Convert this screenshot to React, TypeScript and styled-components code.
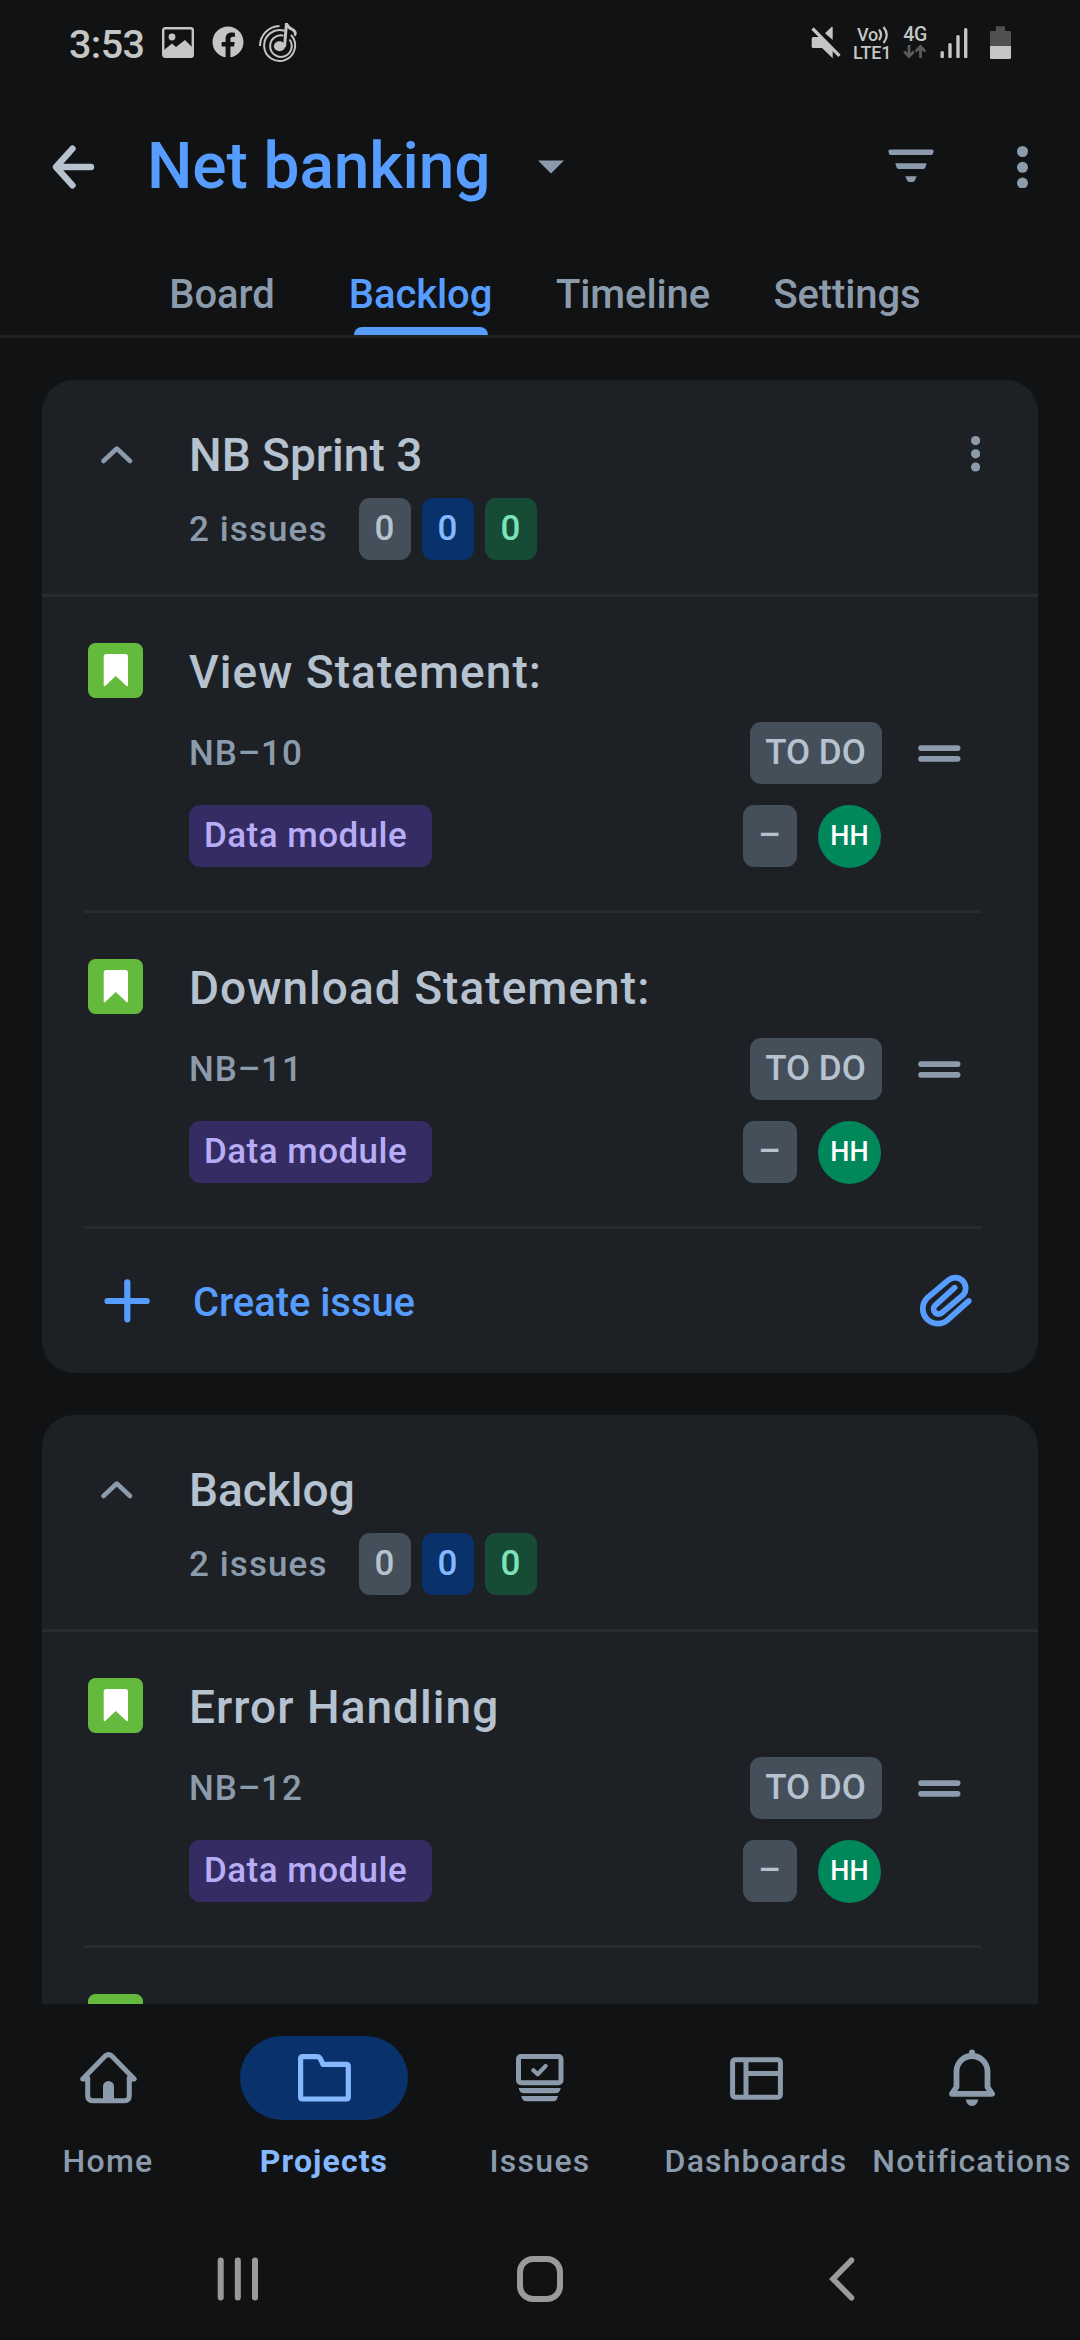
import React from 'react';
import styled, { createGlobalStyle } from 'styled-components';
import { FaFacebook } from 'react-icons/fa';

const color = {
  page: '#111213',
  nav: '#101213',
  card: '#1d2125',
  line: '#282c30',
  text: '#b6c2cf',
  subtle: '#8c9bab',
  blue: '#579dff',
  lightBlue: '#85b8ff',
  status: '#c4c5c5',
  system: '#9a9a9b',
};

const GlobalStyle = createGlobalStyle`
  * { box-sizing: border-box; }
  body {
    margin: 0;
    background: ${color.page};
    font-family: Roboto, "Liberation Sans", sans-serif;
    font-weight: 500;
  }
  svg { display: block; flex: none; }
`;

const Screen = styled.div`
  display: flex;
  flex-direction: column;
  width: 1080px;
  height: 2340px;
  overflow: hidden;
  background: ${color.page};
`;

/* Status bar */
const StatusBar = styled.div`
  display: flex;
  flex: none;
  justify-content: space-between;
  height: 88px;
  padding: 20px 69px 0 69px;
  color: ${color.status};
`;
const StatusLeft = styled.div`
  display: flex;
  height: 44px;
  align-items: center;
`;
const Clock = styled.span`
  width: 93px;
  padding-top: 5px;
  font-size: 39.5px;
  line-height: 48px;
  letter-spacing: -0.6px;
  white-space: nowrap;
`;
const StatusIcon = styled.div<{ $left: number }>`
  margin-left: ${(p) => p.$left}px;
`;
const StatusRight = styled.div`
  display: flex;
  align-items: flex-start;
  padding-top: 6px;
`;
const Volte = styled.div`
  width: 39px;
  margin-left: 12px;
  font-size: 18px;
  line-height: 17px;
  letter-spacing: -0.1px;
  white-space: nowrap;
`;
const VolteTop = styled.div`
  display: flex;
  padding-left: 4px;
`;
const Network = styled.div`
  display: flex;
  flex-direction: column;
  align-items: center;
  width: 24px;
  margin-left: 11px;
  font-size: 19.5px;
  line-height: 18px;
  letter-spacing: -0.4px;
`;

/* App bar */
const AppBar = styled.header`
  display: flex;
  flex: none;
  align-items: center;
  height: 158px;
  padding: 0 52px;
`;
const ProjectTitle = styled.h1`
  margin: 0 0 0 52px;
  width: 391px;
  font-size: 64px;
  font-weight: 500;
  line-height: 76px;
  letter-spacing: -0.1px;
  white-space: nowrap;
  color: ${color.blue};
`;
const AppActions = styled.div`
  display: flex;
  flex: 1;
  align-items: center;
  justify-content: flex-end;
  gap: 83px;
`;

/* Tabs */
const TabBar = styled.nav`
  display: grid;
  flex: none;
  grid-template-columns: 196px 201px 224px 204px;
  height: 92px;
  padding-left: 124px;
  border-bottom: 3px solid #1e2022;
`;
const Tab = styled.div<{ $active?: boolean }>`
  display: flex;
  flex-direction: column;
  align-items: center;
  justify-content: space-between;
  padding-top: 25px;
  font-size: 40px;
  line-height: 48px;
  letter-spacing: -0.1px;
  color: ${(p) => (p.$active ? color.blue : color.subtle)};
`;
const TabIndicator = styled.div`
  width: 134px;
  height: 8px;
  border-radius: 8px 8px 0 0;
  background: ${color.blue};
`;

/* Lists */
const Content = styled.main`
  display: flex;
  flex: 1;
  flex-direction: column;
  gap: 42px;
  min-height: 0;
  padding: 42px 42px 0;
  overflow: hidden;
`;
const Card = styled.section`
  flex: none;
  border-radius: 32px;
  background: ${color.card};
`;
const CardHeader = styled.div`
  display: grid;
  grid-template-columns: 147px 1fr 67px;
  height: 217px;
  padding-top: 47px;
  border-bottom: 3px solid ${color.line};
`;
const ChevronSlot = styled.div`
  padding: 19px 0 0 59px;
`;
const MenuSlot = styled.div`
  padding-top: 9px;
`;
const Heading = styled.h2<{ $spacing?: number }>`
  margin: 0;
  font-size: 46px;
  font-weight: 500;
  line-height: 56px;
  letter-spacing: ${(p) => p.$spacing ?? 0}px;
  white-space: nowrap;
  color: ${color.text};
`;
const CountRow = styled.div`
  display: flex;
  align-items: center;
  gap: 11px;
  height: 62px;
  margin-top: 15px;
`;
const CountLabel = styled.span`
  width: 159px;
  padding-top: 2px;
  font-size: 35px;
  line-height: 62px;
  letter-spacing: 1.1px;
  color: ${color.subtle};
`;
const Badge = styled.span<{ $bg: string; $fg: string; $w: number }>`
  width: ${(p) => p.$w}px;
  height: 62px;
  padding-right: 1px;
  border-radius: 11px;
  background: ${(p) => p.$bg};
  color: ${(p) => p.$fg};
  font-size: 35px;
  line-height: 62px;
  text-align: center;
  white-space: nowrap;
`;
const Issue = styled.article`
  display: grid;
  grid-template-columns: 147px 1fr;
  height: 313px;
  padding-top: 46px;
`;
const TypeSlot = styled.div`
  padding-left: 46px;
`;
const IssueBody = styled.div`
  padding-top: 1px;
`;
const IssueRow = styled.div<{ $top: number; $right: number }>`
  display: flex;
  align-items: center;
  height: 62px;
  margin-top: ${(p) => p.$top}px;
  padding-right: ${(p) => p.$right}px;
`;
const IssueKey = styled.span`
  flex: 1;
  padding-top: 2px;
  font-size: 35px;
  line-height: 62px;
  letter-spacing: 0.9px;
  color: ${color.subtle};
`;
const DragSlot = styled.div`
  margin: 1px 0 0 36px;
`;
const EpicBadge = styled.span`
  width: 243px;
  height: 62px;
  margin-right: auto;
  padding-left: 15px;
  border-radius: 11px;
  background: #352c63;
  color: #b8acf6;
  font-size: 35px;
  line-height: 62px;
  letter-spacing: 0.45px;
`;
const Avatar = styled.span`
  width: 63px;
  height: 63px;
  margin-left: 21px;
  border-radius: 50%;
  background: #00875a;
  color: #fff;
  font-size: 27px;
  line-height: 62px;
  text-align: center;
`;
const Separator = styled.div`
  height: 3px;
  margin: 0 57px 0 42px;
  background: ${color.line};
`;
const CreateRow = styled.div`
  display: flex;
  align-items: center;
  height: 144px;
  padding: 0 66px 0 62px;
`;
const CreateLabel = styled.span`
  flex: 1;
  margin: 4px 0 0 43px;
  font-size: 40px;
  line-height: 48px;
  letter-spacing: -0.05px;
  color: ${color.blue};
`;

/* Bottom navigation */
const BottomNav = styled.nav`
  display: grid;
  flex: none;
  grid-template-columns: repeat(5, 216px);
  height: 214px;
  padding-top: 32px;
  background: ${color.nav};
`;
const NavItem = styled.div<{ $active?: boolean }>`
  display: flex;
  flex-direction: column;
  align-items: center;
  color: ${(p) => (p.$active ? color.lightBlue : color.subtle)};
  font-weight: ${(p) => (p.$active ? 700 : 500)};
`;
const NavPill = styled.div<{ $active?: boolean }>`
  display: flex;
  align-items: center;
  justify-content: center;
  width: 168px;
  height: 84px;
  border-radius: 42px;
  background: ${(p) => (p.$active ? '#09326c' : 'transparent')};
`;
const NavLabel = styled.span<{ $spacing: number }>`
  margin-top: 21px;
  font-size: 32px;
  line-height: 40px;
  letter-spacing: ${(p) => p.$spacing}px;
  white-space: nowrap;
`;
const SystemBar = styled.div`
  display: grid;
  flex: none;
  grid-template-columns: repeat(3, 302px);
  justify-content: center;
  justify-items: center;
  align-items: center;
  height: 122px;
  background: ${color.nav};
`;

/* Icons */
const PictureIcon = () => (
  <svg width="32" height="31" viewBox="0 0 32 31">
    <rect x="1.2" y="1.2" width="29.6" height="28.6" rx="2" fill="none" stroke="currentColor" strokeWidth="2.4" />
    <circle cx="10" cy="10" r="3.4" fill="currentColor" />
    <path d="M2 23 10 16.5 14 20 23 13 30.5 20.5V29.5H2z" fill="currentColor" />
  </svg>
);
const MusicIcon = () => (
  <svg width="40" height="42" viewBox="0 0 40 42" fill="none" stroke="currentColor" strokeWidth="2">
    <path d="M1 25A20 20 0 0 1 20.500 5" />
    <path d="M25.500 9.800A15.500 15.500 0 1 0 32 14" />
    <path d="M24.500 14.600A10.800 10.800 0 1 0 30.500 18.500" />
    <ellipse cx="20.500" cy="25.300" rx="5.600" ry="5" fill="currentColor" stroke="none" />
    <path d="M25.500 26 27.500 2" strokeWidth="3" />
    <path d="M27.500 3Q29.500 7 33.500 8.500 38 11.500 35.500 14.500" strokeWidth="2.800" />
  </svg>
);
const MuteIcon = () => (
  <svg width="30" height="33" viewBox="0 0 30 33" fill="currentColor">
    <path d="M0.700 12.500q0-1.500 1.500-1.500H10L21.700 22V32.300L11 22H2.200q-1.500 0-1.500-1.500z" />
    <path d="M14 7.300 20 1.500q1.700-1.500 1.700 0.500V14z" />
    <path d="M1.500 2.500 28.500 29.800" stroke="currentColor" strokeWidth="3.200" />
  </svg>
);
const WavesIcon = () => (
  <svg width="12" height="18" viewBox="0 0 12 18" fill="none" stroke="currentColor" strokeWidth="2.2">
    <path d="M1 3.500Q5 8.500 1 14" />
    <path d="M5.500 1Q12 9 5.500 17" />
  </svg>
);
const DataArrowsIcon = () => (
  <svg width="24" height="15" viewBox="0 0 24 15" fill="none" stroke="#5a5b5c" strokeWidth="2.800">
    <path d="M6 1V12M1.200 7.500 6 12.500 10.800 7.500M17.500 14V3M12.700 7.500 17.500 2.500 22.300 7.500" />
  </svg>
);
const SignalIcon = () => (
  <svg width="28" height="32" viewBox="0 0 28 32" fill="currentColor">
    <rect x="0.500" y="25" width="3.400" height="7.300" rx="1.500" />
    <rect x="8.300" y="17" width="3.400" height="15.300" rx="1.500" />
    <rect x="16.300" y="9" width="3.400" height="23.300" rx="1.500" />
    <rect x="24" y="2" width="3.400" height="30.300" rx="1.500" />
  </svg>
);
const BatteryIcon = () => (
  <svg width="21" height="33" viewBox="0 0 21 33">
    <path d="M5.800 5V1.200Q5.800 0.200 6.800 0.200H14Q15 0.200 15 1.200V5H20Q21 5 21 6V20H0V6Q0 5 1 5z" fill="#4f5051" />
    <path d="M0 20H21V31.500Q21 33 19.500 33H1.500Q0 33 0 31.500z" fill="currentColor" />
  </svg>
);
const BackIcon = () => (
  <svg width="43" height="44" viewBox="0 0 43 44" fill="none" stroke={color.text} strokeWidth="6.400" strokeLinecap="round" strokeLinejoin="round">
    <path d="M20.500 3.700 4 22 20.500 40.300M4.500 22H39" />
  </svg>
);
const CaretIcon = () => (
  <svg width="26" height="14" viewBox="0 0 26 14">
    <path d="M0 0.500H26L13 13.500z" fill={color.subtle} />
  </svg>
);
const FilterIcon = () => (
  <svg width="46" height="34" viewBox="0 0 46 34" fill={color.subtle}>
    <path d="M2 0.500H44Q45.800 0.500 45.600 2.500L44.800 5Q44.400 6 43.500 6H2.500Q1.600 6 1.200 5L0.400 2.500Q0.200 0.500 2 0.500z" />
    <path d="M7.300 14.200H38.700L37.300 18.600Q36.800 20 35.500 20H10.500Q9.200 20 8.700 18.600z" />
    <path d="M17.300 27.200H28.700L27 31.300Q26.300 33 24.500 33H21.500Q19.700 33 19 31.300z" />
  </svg>
);
const FilterSlot = styled.div`
  margin-bottom: 3px;
`;
const DotsIcon = ({ r, step }: { r: number; step: number }) => {
  const h = 2 * (r + step);
  return (
    <svg width={2 * r} height={h} viewBox={`0 0 ${2 * r} ${h}`} fill={color.subtle}>
      {[0, 1, 2].map((i) => (
        <circle key={i} cx={r} cy={r + i * step} r={r} />
      ))}
    </svg>
  );
};
const ChevronIcon = () => (
  <svg width="32" height="18" viewBox="0 0 32 18" fill="none" stroke={color.subtle} strokeWidth="4.500" strokeLinecap="round" strokeLinejoin="round">
    <path d="M2.500 15 15.800 2.500 29 15" />
  </svg>
);
const StoryIcon = () => (
  <svg width="55" height="55" viewBox="0 0 55 55">
    <rect width="55" height="55" rx="7.500" fill="#63ba3c" />
    <path d="M15.700 13.700Q15.700 11 18.400 11H37.300Q40 11 40 13.700V42.300Q40 44 38.500 43L27.800 33 17.200 43Q15.700 44 15.700 42.300z" fill="#fff" />
  </svg>
);
const DragIcon = () => (
  <svg width="43" height="17" viewBox="0 0 43 17" fill={color.subtle}>
    <rect x="0.200" y="0.200" width="42.300" height="5.700" rx="2.850" />
    <rect x="0.200" y="10.900" width="42.300" height="5.800" rx="2.850" />
  </svg>
);
const PlusIcon = () => (
  <svg width="46" height="44" viewBox="0 0 46 44" stroke={color.blue} strokeWidth="6.200" strokeLinecap="round">
    <path d="M3.500 22H42.700M23.300 3.300V40.300" />
  </svg>
);
const ClipIcon = () => (
  <svg width="53" height="54" viewBox="0 0 53 54" fill="none" stroke={color.blue} strokeWidth="5.800" strokeLinecap="round">
    <path d="M49.700 27 29 45.600A15 15 0 0 1 7.800 24.400L29.600 5.900A10.500 10.500 0 0 1 44.400 20.600L23.200 38.500A5 5 0 0 1 16 31.500L35.600 13.700" />
  </svg>
);
const HomeIcon = () => (
  <svg width="57" height="52" viewBox="0 0 57 52" fill="none" stroke="currentColor" strokeWidth="5" strokeLinecap="round" strokeLinejoin="round">
    <path d="M7.700 27H2.700L25.200 4Q28.500 1.200 31.800 4L54.200 27H49.300" />
    <path d="M7.700 26V43.700Q7.700 48.700 12.700 48.700H44.300Q49.300 48.700 49.300 43.700V26" />
    <path d="M23 49V34.500a5.500 5.500 0 0 1 11 0V49z" fill="currentColor" stroke="none" />
  </svg>
);
const FolderIcon = () => (
  <svg width="53" height="48" viewBox="0 0 53 48" fill="none" stroke="currentColor" strokeWidth="5.200" strokeLinejoin="round">
    <path d="M2.600 4.600q0-2 2-2H18.500q3 0 4.300 2.900L25 10.400H48.300q2 0 2 2V43q0 2-2 2H4.600q-2 0-2-2z" />
  </svg>
);
const IssuesIcon = () => (
  <svg width="48" height="48" viewBox="0 0 48 48" fill="currentColor">
    <rect x="2.500" y="2.500" width="42.500" height="26.300" rx="2.500" fill="none" stroke="currentColor" strokeWidth="5" />
    <path d="M17.300 16.300 21.700 20.300 29.700 11.900" fill="none" stroke="currentColor" strokeWidth="4.200" strokeLinecap="round" strokeLinejoin="round" />
    <path d="M2.700 34H44.700Q44 39.300 39.500 39.300H8Q3.500 39.300 2.700 34z" />
    <path d="M5.300 42H42Q41.300 47.300 37 47.300H10.500Q6 47.300 5.300 42z" />
  </svg>
);
const DashboardIcon = () => (
  <svg width="53" height="43" viewBox="0 0 53 43" fill="none" stroke="currentColor" strokeWidth="5">
    <rect x="2.600" y="2.800" width="47.800" height="37.400" rx="2.500" />
    <path d="M16 3V40M16 16.600H50" />
  </svg>
);
const BellIcon = () => (
  <svg width="46" height="58" viewBox="0 0 46 58" fill="currentColor">
    <circle cx="23" cy="3.600" r="3" />
    <path d="M7.500 38V22.500A15.500 15.500 0 0 1 38.500 22.500V38L43 44.800H3z" fill="none" stroke="currentColor" strokeWidth="5.800" strokeLinejoin="round" />
    <path d="M16.800 50.600H29.200Q28.300 57 23 57T16.800 50.600z" />
  </svg>
);
const RecentsIcon = () => (
  <svg width="42" height="44" viewBox="0 0 42 44" stroke={color.system} strokeWidth="6" strokeLinecap="round">
    <path d="M3.700 3.500V40.500M20.800 3.500V40.500M38 3.500V40.500" />
  </svg>
);
const HomeKeyIcon = () => (
  <svg width="48" height="48" viewBox="0 0 48 48" fill="none" stroke={color.system} strokeWidth="6">
    <rect x="4" y="4" width="40" height="40" rx="13" />
  </svg>
);
const BackKeyIcon = () => (
  <svg width="26" height="44" viewBox="0 0 26 44" fill="none" stroke={color.system} strokeWidth="5.600" strokeLinecap="round">
    <path d="M22.500 3.300 4 22 22.500 40.700" />
  </svg>
);

const badgeTones = [
  { bg: '#454f59', fg: '#b6c2cf' },
  { bg: '#09326c', fg: '#85b8ff' },
  { bg: '#164b35', fg: '#7ee2b8' },
];

const ListHeader = ({ title, count, menu }: { title: string; count: string; menu?: boolean }) => (
  <CardHeader>
    <ChevronSlot>
      <ChevronIcon />
    </ChevronSlot>
    <div>
      <Heading>{title}</Heading>
      <CountRow>
        <CountLabel>{count}</CountLabel>
        {badgeTones.map((t) => (
          <Badge key={t.bg} $bg={t.bg} $fg={t.fg} $w={52}>
            0
          </Badge>
        ))}
      </CountRow>
    </div>
    <MenuSlot>{menu && <DotsIcon r={4.600} step={13.200} />}</MenuSlot>
  </CardHeader>
);

const IssueItem = ({ title, id }: { title: string; id: string }) => (
  <>
    <Issue>
      <TypeSlot>
        <StoryIcon />
      </TypeSlot>
      <IssueBody>
        <Heading $spacing={1.04}>{title}</Heading>
        <IssueRow $top={22} $right={77}>
          <IssueKey>{id}</IssueKey>
          <Badge $bg="#454f59" $fg="#b6c2cf" $w={132}>
            TO DO
          </Badge>
          <DragSlot>
            <DragIcon />
          </DragSlot>
        </IssueRow>
        <IssueRow $top={21} $right={157}>
          <EpicBadge>Data module</EpicBadge>
          <Badge $bg="#454f59" $fg="#b6c2cf" $w={54}>
            –
          </Badge>
          <Avatar>HH</Avatar>
        </IssueRow>
      </IssueBody>
    </Issue>
    <Separator />
  </>
);

const navItems = [
  { label: 'Home', icon: <HomeIcon />, spacing: 1.3 },
  { label: 'Projects', icon: <FolderIcon />, spacing: 1.1, active: true },
  { label: 'Issues', icon: <IssuesIcon />, spacing: 1.3 },
  { label: 'Dashboards', icon: <DashboardIcon />, spacing: 1.15 },
  { label: 'Notifications', icon: <BellIcon />, spacing: 1.15 },
];

export default function App() {
  return (
    <>
      <GlobalStyle />
      <Screen>
        <StatusBar>
          <StatusLeft>
            <Clock>3:53</Clock>
            <StatusIcon $left={0}>
              <PictureIcon />
            </StatusIcon>
            <StatusIcon $left={18}>
              <FaFacebook size={32} />
            </StatusIcon>
            <StatusIcon $left={15}>
              <MusicIcon />
            </StatusIcon>
          </StatusLeft>
          <StatusRight>
            <MuteIcon />
            <Volte>
              <VolteTop>
                Vo
                <WavesIcon />
              </VolteTop>
              LTE1
            </Volte>
            <Network>
              4G
              <DataArrowsIcon />
            </Network>
            <StatusIcon $left={13}>
              <SignalIcon />
            </StatusIcon>
            <StatusIcon $left={22}>
              <BatteryIcon />
            </StatusIcon>
          </StatusRight>
        </StatusBar>

        <AppBar>
          <BackIcon />
          <ProjectTitle>Net banking</ProjectTitle>
          <CaretIcon />
          <AppActions>
            <FilterSlot>
              <FilterIcon />
            </FilterSlot>
            <DotsIcon r={5.500} step={15.800} />
          </AppActions>
        </AppBar>

        <TabBar>
          <Tab>Board</Tab>
          <Tab $active>
            Backlog
            <TabIndicator />
          </Tab>
          <Tab>Timeline</Tab>
          <Tab>Settings</Tab>
        </TabBar>

        <Content>
          <Card>
            <ListHeader title="NB Sprint 3" count="2 issues" menu />
            <IssueItem title="View Statement:" id="NB–10" />
            <IssueItem title="Download Statement:" id="NB–11" />
            <CreateRow>
              <PlusIcon />
              <CreateLabel>Create issue</CreateLabel>
              <ClipIcon />
            </CreateRow>
          </Card>
          <Card>
            <ListHeader title="Backlog" count="2 issues" />
            <IssueItem title="Error Handling" id="NB–12" />
            <Issue>
              <TypeSlot>
                <StoryIcon />
              </TypeSlot>
            </Issue>
          </Card>
        </Content>

        <BottomNav>
          {navItems.map((n) => (
            <NavItem key={n.label} $active={n.active}>
              <NavPill $active={n.active}>{n.icon}</NavPill>
              <NavLabel $spacing={n.spacing}>{n.label}</NavLabel>
            </NavItem>
          ))}
        </BottomNav>
        <SystemBar>
          <RecentsIcon />
          <HomeKeyIcon />
          <BackKeyIcon />
        </SystemBar>
      </Screen>
    </>
  );
}
